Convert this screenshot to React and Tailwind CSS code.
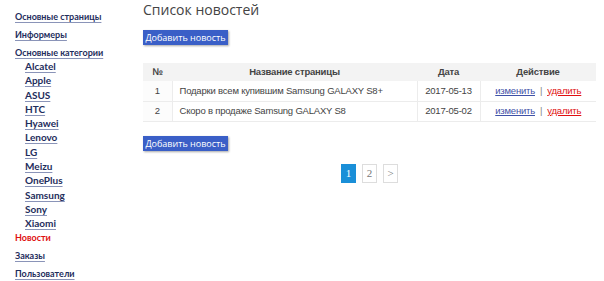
import React from "react";

const cats = ["Alcatel","Apple","ASUS","HTC","Hyawei","Lenovo","LG","Meizu","OnePlus","Samsung","Sony","Xiaomi"];

function AddBtn() {
  return (
    <button className="h-[15px] w-[85px] bg-[#3a5fc7] text-white text-[9px] leading-[15px] font-['Open_Sans',sans-serif] shadow-[1px_1px_2px_rgba(0,0,0,0.35)] text-center">
      Добавить новость
    </button>
  );
}

const link = "text-[#1e2d5c] underline decoration-[#8a94b8] underline-offset-2 leading-[12px]";

export default function App() {
  return (
    <div className="flex w-[604px] h-[281px] bg-white overflow-hidden">
      <div className="w-[143px] shrink-0 pl-[15px] pt-[11px] font-['Lato',sans-serif] font-bold text-[9px]">
        <div className="flex flex-col gap-[6px]">
          <a className={link}>Основные страницы</a>
          <a className={link}>Информеры</a>
          <a className={link}>Основные категории</a>
        </div>
        <div className="flex flex-col pl-[10px] mt-[1px] gap-[2.3px]">
          {cats.map(c => (
            <a key={c} className={link + " text-[10px]"}>{c}</a>
          ))}
        </div>
        <div className="flex flex-col gap-[6px] mt-[3px]">
          <a className="text-[#e01010] leading-[12px]">Новости</a>
          <a className={link}>Заказы</a>
          <a className={link}>Пользователи</a>
        </div>
      </div>
      <div className="flex-1 pr-[8px] pt-0 flex flex-col items-start">
        <h1 className="text-[14px] text-[#444] font-['Open_Sans',sans-serif] leading-[18px] mt-[1px]">Список новостей</h1>
        <div className="mt-[11px] flex"><AddBtn /></div>
        <table className="mt-[18px] w-[453px] text-[9.5px] tracking-[-0.2px] font-['Liberation_Sans',sans-serif] text-[#444] border-collapse">
          <thead>
            <tr className="bg-[#f3f3f3] h-[18px]">
              <th className="w-[29px] font-bold">№</th>
              <th className="font-bold">Название страницы</th>
              <th className="w-[63px] font-bold">Дата</th>
              <th className="w-[116px] font-bold">Действие</th>
            </tr>
          </thead>
          <tbody>
            {[["1","Подарки всем купившим Samsung GALAXY S8+","2017-05-13"],["2","Скоро в продаже Samsung GALAXY S8","2017-05-02"]].map(r => (
              <tr key={r[0]} className="h-[20px] border-b border-[#ececec]">
                <td className="text-center border-r border-[#ececec] bg-[#fcfcfc]">{r[0]}</td>
                <td className="pl-[7px] border-r border-[#ececec]">{r[1]}</td>
                <td className="text-center border-r border-[#ececec]">{r[2]}</td>
                <td className="text-center">
                  <a className="text-[#3f51a6] underline">изменить</a>
                  <span className="mx-[5px] text-[#888]">|</span>
                  <a className="text-[#e01010] underline">удалить</a>
                </td>
              </tr>
            ))}
          </tbody>
        </table>
        <div className="mt-[14px] flex"><AddBtn /></div>
        <div className="self-stretch flex justify-center gap-[6px] mt-[13px] font-['Liberation_Serif',serif] text-[11px]">
          <span className="w-[15px] h-[19px] bg-[#1a8fd8] text-white flex items-center justify-center">1</span>
          <span className="w-[15px] h-[19px] border border-[#ddd] text-[#777] flex items-center justify-center">2</span>
          <span className="w-[15px] h-[19px] border border-[#ddd] text-[#777] flex items-center justify-center">&gt;</span>
        </div>
      </div>
    </div>
  );
}
